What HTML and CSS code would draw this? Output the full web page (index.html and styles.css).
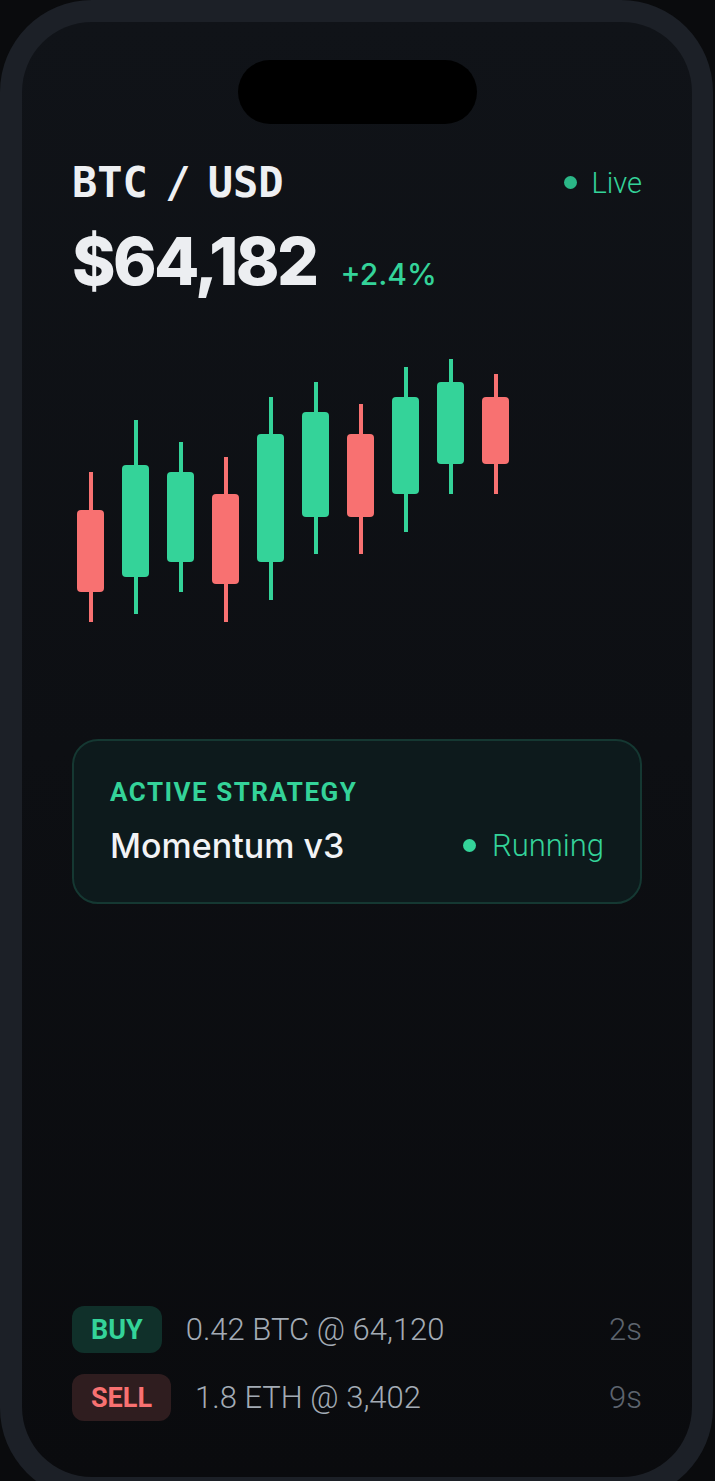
FILE: index.html
```html
<!DOCTYPE html>
<html lang="en">
<head>
    <meta charset="UTF-8">
    <meta name="viewport" content="width=device-width, initial-scale=1.0">
    <title>Trading Bot</title>
    <link rel="stylesheet" href="styles.css">
</head>
<body>
    <div class="phone">
        <div class="screen">
            <div class="island"></div>

            <div class="pair-row">
                <h1 class="pair">BTC / USD</h1>
                <span class="live"><span class="dot dim"></span>Live</span>
            </div>

            <div class="price-row">
                <span class="price">$64,182</span>
                <span class="change">+2.4%</span>
            </div>

            <!-- candles: x step 45, body 27 wide, wick 4 wide -->
            <svg class="chart" width="570" height="290" viewBox="0 0 570 290">
                <g fill="#f87171">
                    <rect x="17" y="122" width="4" height="150"/>
                    <rect x="5" y="160" width="27" height="82" rx="4"/>
                </g>
                <g fill="#34d399">
                    <rect x="62" y="70" width="4" height="194"/>
                    <rect x="50" y="115" width="27" height="112" rx="4"/>
                </g>
                <g fill="#34d399">
                    <rect x="107" y="92" width="4" height="150"/>
                    <rect x="95" y="122" width="27" height="90" rx="4"/>
                </g>
                <g fill="#f87171">
                    <rect x="152" y="107" width="4" height="165"/>
                    <rect x="140" y="144" width="27" height="90" rx="4"/>
                </g>
                <g fill="#34d399">
                    <rect x="197" y="47" width="4" height="203"/>
                    <rect x="185" y="84" width="27" height="128" rx="4"/>
                </g>
                <g fill="#34d399">
                    <rect x="242" y="32" width="4" height="172"/>
                    <rect x="230" y="62" width="27" height="105" rx="4"/>
                </g>
                <g fill="#f87171">
                    <rect x="287" y="54" width="4" height="150"/>
                    <rect x="275" y="84" width="27" height="83" rx="4"/>
                </g>
                <g fill="#34d399">
                    <rect x="332" y="17" width="4" height="165"/>
                    <rect x="320" y="47" width="27" height="97" rx="4"/>
                </g>
                <g fill="#34d399">
                    <rect x="377" y="9" width="4" height="135"/>
                    <rect x="365" y="32" width="27" height="82" rx="4"/>
                </g>
                <g fill="#f87171">
                    <rect x="422" y="24" width="4" height="120"/>
                    <rect x="410" y="47" width="27" height="67" rx="4"/>
                </g>
            </svg>

            <div class="strategy">
                <div class="strategy-label">ACTIVE STRATEGY</div>
                <div class="strategy-row">
                    <span class="strategy-name">Momentum v3</span>
                    <span class="status"><span class="dot"></span>Running</span>
                </div>
            </div>

            <div class="trades">
                <div class="trade">
                    <span class="badge buy">BUY</span>
                    <span class="trade-info">0.42 BTC @ 64,120</span>
                    <span class="trade-time">2s</span>
                </div>
                <div class="trade">
                    <span class="badge sell">SELL</span>
                    <span class="trade-info">1.8 ETH @ 3,402</span>
                    <span class="trade-time">9s</span>
                </div>
            </div>
        </div>
    </div>
</body>
</html>
```

FILE: styles.css
```css
* { margin: 0; padding: 0; box-sizing: border-box; }
body {
    background: #0a0b0d;
    font-family: 'Roboto', 'Inter', sans-serif;
    color: #e9ebee;
    overflow: hidden;
}

.phone {
    width: 713px;
    height: 1500px;
    background: #1c2027;
    border-radius: 92px;
    padding: 22px 21px 0 22px;
}

.screen {
    height: 1455px;
    border-radius: 70px;
    background: linear-gradient(180deg, #101318 0%, #0d0f13 50%, #0a0b0e 100%);
    padding: 38px 50px 56px 50px;
    display: flex;
    flex-direction: column;
}

.island {
    width: 239px;
    height: 64px;
    background: #000000;
    border-radius: 32px;
    align-self: center;
    margin-bottom: 34px;
}

.pair-row {
    display: flex;
    justify-content: space-between;
    align-items: center;
}

.pair {
    font-family: 'DejaVu Sans Mono', monospace;
    font-size: 42px;
    font-weight: 700;
    color: #eef0f3;
    letter-spacing: 0;
    word-spacing: -8px;
}

.live, .status {
    display: flex;
    align-items: center;
    gap: 14px;
    color: #34d399;
    font-size: 29px;
    font-weight: 300;
}

.status {
    font-size: 31px;
    gap: 16px;
}

.dot {
    width: 13px;
    height: 13px;
    border-radius: 50%;
    background: #34d399;
}

.dot.dim {
    background: #2bb787;
}

.price-row {
    display: flex;
    align-items: baseline;
    gap: 24px;
    margin-top: 14px;
}

.price {
    font-family: 'Inter', sans-serif;
    font-size: 66px;
    font-weight: 800;
    letter-spacing: -2.6px;
    color: #eceef1;
}

.change {
    font-family: 'Inter', sans-serif;
    font-size: 30px;
    font-weight: 500;
    color: #34d399;
}

.chart {
    display: block;
    margin-top: 49px;
}

.strategy {
    margin-top: 99px;
    background: #0d1a1c;
    border: 2px solid #153832;
    border-radius: 26px;
    padding: 36px 36px 36px 36px;
}

.strategy-label {
    color: #34d399;
    font-size: 26px;
    font-weight: 700;
    letter-spacing: 1.5px;
}

.strategy-row {
    display: flex;
    justify-content: space-between;
    align-items: center;
    margin-top: 18px;
}

.strategy-name {
    font-family: 'Inter', sans-serif;
    font-size: 34px;
    font-weight: 500;
    color: #f2f3f5;
}

.trades {
    margin-top: auto;
    display: flex;
    flex-direction: column;
    gap: 21px;
}

.trade {
    display: flex;
    align-items: center;
    gap: 24px;
}

.badge {
    height: 47px;
    padding: 0 19px;
    border-radius: 12px;
    font-size: 27px;
    font-weight: 700;
    display: flex;
    align-items: center;
}

.badge.buy {
    background: #10302a;
    color: #34d399;
}

.badge.sell {
    background: #2f1d1f;
    color: #f87171;
}

.trade-info {
    font-size: 31px;
    font-weight: 300;
    color: #a3abb5;
    flex: 1;
}

.trade-time {
    font-size: 31px;
    font-weight: 300;
    color: #5d646e;
}
```
